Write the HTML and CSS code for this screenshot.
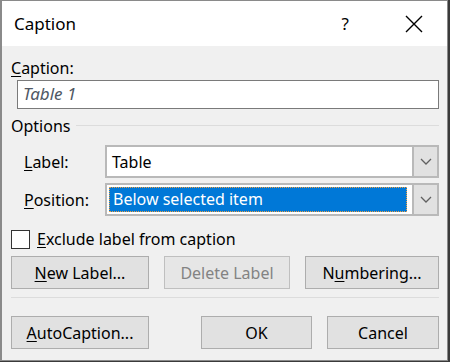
FILE: index.html
```html
<!DOCTYPE html>
<html lang="en">
  <head>
    <meta charset="UTF-8" />
    <title>Caption</title>
    <link rel="stylesheet" href="styles.css">
  </head>
  <body>
    <div class="dialog">
      <!-- Title bar -->
      <div class="titlebar">
        <span class="title">Caption</span>
        <span class="help">?</span>
        <svg class="close" width="18" height="18" viewBox="0 0 18 18">
          <path d="M1,1 L17,17 M17,1 L1,17" stroke="#000" stroke-width="1.4" fill="none" />
        </svg>
      </div>

      <div class="content">
        <div class="caption-label"><u>C</u>aption:</div>
        <div class="textbox">Table 1</div>

        <div class="group-head">
          <span>Options</span>
          <div class="rule"></div>
        </div>

        <div class="field">
          <span class="field-label"><u>L</u>abel:</span>
          <div class="combo">
            <div class="combo-value">Table</div>
            <div class="combo-btn">
              <svg width="12" height="8" viewBox="0 0 12 8"><path d="M1,1 L6,6 L11,1" stroke="#606060" stroke-width="1.3" fill="none" /></svg>
            </div>
          </div>
        </div>

        <div class="field second">
          <span class="field-label"><u>P</u>osition:</span>
          <div class="combo">
            <div class="combo-value"><span class="selected">Below selected item</span></div>
            <div class="combo-btn">
              <svg width="12" height="8" viewBox="0 0 12 8"><path d="M1,1 L6,6 L11,1" stroke="#606060" stroke-width="1.3" fill="none" /></svg>
            </div>
          </div>
        </div>

        <label class="check">
          <span class="box"></span>
          <span><u>E</u>xclude label from caption</span>
        </label>

        <div class="buttons">
          <button class="btn w-new"><u>N</u>ew Label...</button>
          <button class="btn w-del" disabled>Delete Label</button>
          <button class="btn w-num">N<u>u</u>mbering...</button>
        </div>

        <div class="separator"></div>

        <div class="buttons bottom">
          <button class="btn w-new"><u>A</u>utoCaption...</button>
          <div class="spacer"></div>
          <button class="btn w-ok">OK</button>
          <button class="btn w-cancel">Cancel</button>
        </div>
      </div>
    </div>
  </body>
</html>
```

FILE: styles.css
```css
* {
  margin: 0;
  padding: 0;
  box-sizing: border-box;
  font-family: 'Noto Sans', 'Open Sans', sans-serif;
}

html,
body {
  background: #3a3a3a;
}

body {
  width: 450px;
  height: 362px;
  overflow: hidden;
}

u {
  text-decoration-thickness: 1px;
  text-underline-offset: 2px;
}

.dialog {
  width: 448px;
  height: 361px;
  background: #f0f0f0;
  border: 1px solid #8a8a8a;
  border-left-width: 2px;
  font-size: 16px;
  color: #000;
}

/* Title bar */
.titlebar {
  height: 45px;
  background: #fff;
  display: flex;
  align-items: center;
  padding-left: 12px;
}

.title {
  font-size: 17px;
  flex: 1;
  padding-bottom: 1px;
}

.help {
  font-size: 17px;
  margin-right: 56px;
}

.close {
  margin-right: 24px;
}

/* Content */
.content {
  padding: 10px 8px 0 9px;
}

.caption-label {
  height: 24px;
  line-height: 24px;
}

.textbox {
  margin-left: 6px;
  height: 29px;
  border: 1px solid #7a7a7a;
  background: #fff;
  font-style: italic;
  font-size: 17px;
  color: #505864;
  line-height: 26px;
  padding-left: 5px;
}

.group-head {
  display: flex;
  align-items: center;
  gap: 6px;
  height: 32px;
  padding-top: 2px;
}

.rule {
  flex: 1;
  height: 1px;
  background: #dcdcdc;
  margin-top: -2px;
}

.field {
  display: flex;
  align-items: center;
  margin-top: 4px;
  padding-left: 13px;
}

.field.second {
  margin-top: 5px;
}

.field-label {
  width: 81px;
}

.combo {
  flex: 1;
  height: 33px;
  display: flex;
  border: 2px solid #b9b9b9;
  background: #fff;
}

.combo-value {
  flex: 1;
  padding: 2px 2px 2px 5px;
  display: flex;
  align-items: center;
}

.selected {
  display: block;
  width: 100%;
  margin-left: -3px;
  height: 25px;
  line-height: 22px;
  background: #0078d7;
  color: #fff;
  padding-left: 3px;
  border: 1px dotted #f0a040;
}

.combo-btn {
  width: 25px;
  background: #e1e1e1;
  border-left: 2px solid #b9b9b9;
  display: flex;
  align-items: center;
  justify-content: center;
}

/* Checkbox */
.check {
  display: flex;
  align-items: center;
  gap: 7px;
  margin-top: 13px;
  height: 20px;
}

.box {
  width: 19px;
  height: 19px;
  border: 1px solid #333;
  background: #fff;
}

/* Buttons */
.buttons {
  display: flex;
  justify-content: space-between;
  margin-top: 7px;
}

.buttons.bottom {
  margin-top: 18px;
  justify-content: flex-start;
}

.spacer {
  flex: 1;
}

.btn {
  height: 33px;
  background: #e1e1e1;
  border: 1px solid #adadad;
  font-size: 16px;
  color: #000;
}

.btn:disabled {
  color: #838383;
  background: #e6e6e6;
  border-color: #bfbfbf;
}

.w-new {
  width: 138px;
}

.w-del {
  width: 126px;
}

.w-num {
  width: 134px;
}

.w-ok {
  width: 111px;
  margin-right: 15px;
}

.w-cancel {
  width: 112px;
}

.separator {
  height: 1px;
  background: #dcdcdc;
  margin-top: 8px;
}
```
